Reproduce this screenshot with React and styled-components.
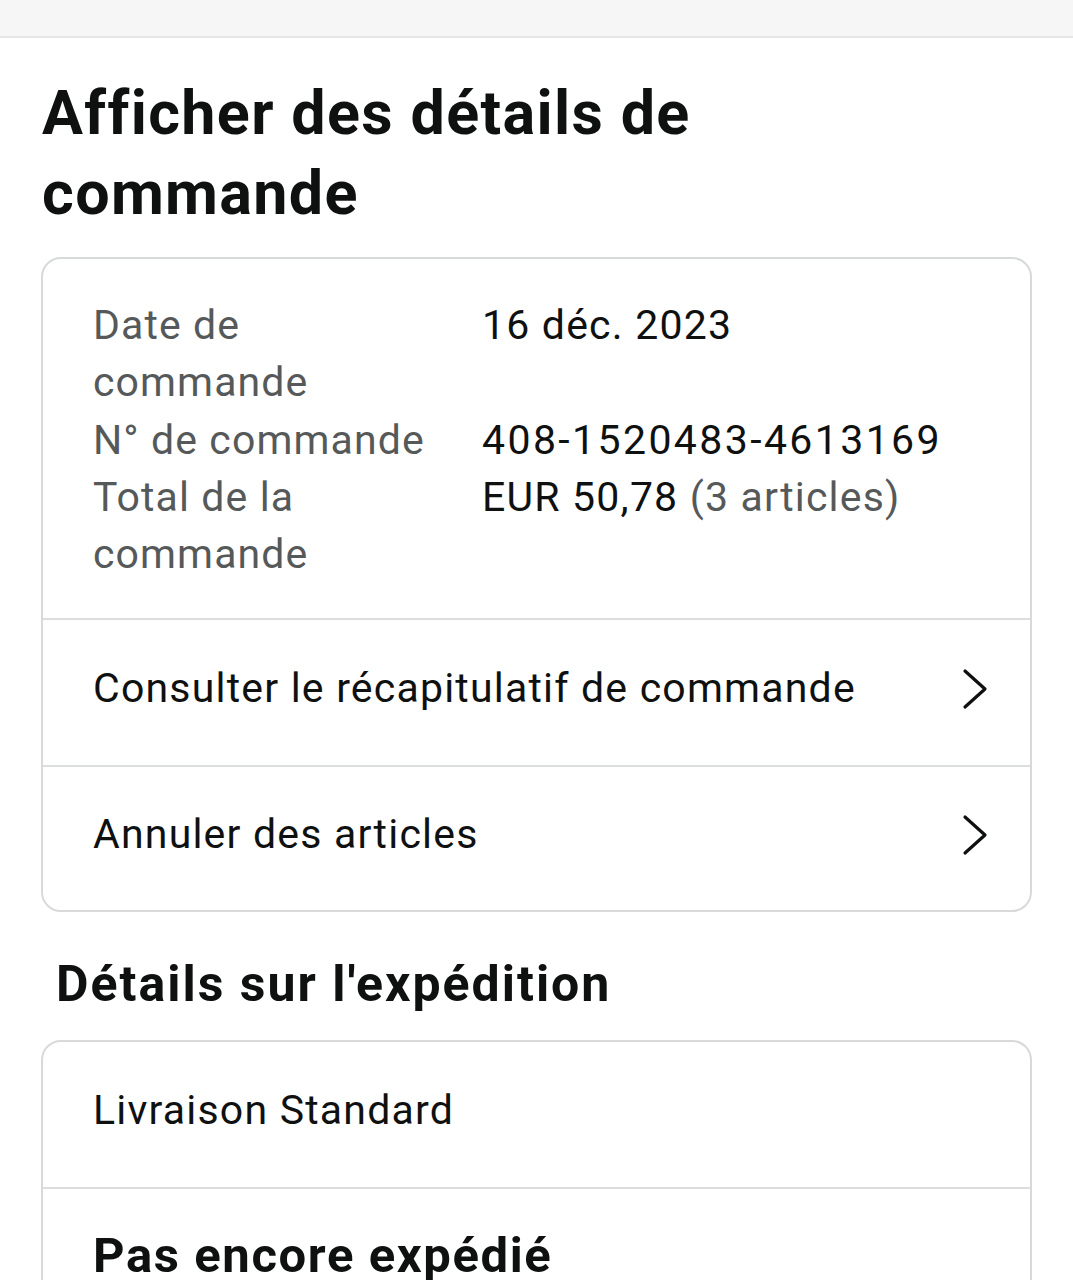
import React from 'react';
import styled, { createGlobalStyle } from 'styled-components';

const GlobalStyle = createGlobalStyle`
  html, body {
    margin: 0;
    padding: 0;
    background: #fff;
  }
  body {
    font-family: Roboto, "Noto Sans", "Liberation Sans", sans-serif;
    color: #0f1111;
  }
`;

const TopBar = styled.div`
  height: 36px;
  background: #f6f6f6;
  border-bottom: 2px solid #e6e6e6;
`;

const Page = styled.main`
  padding: 0 41px;
`;

const Title = styled.h1`
  margin: 0;
  padding: 35px 0 24px 1px;
  font-size: 61px;
  line-height: 80px;
  font-weight: 700;
  max-width: 720px;
  letter-spacing: 1.35px;
`;

const Card = styled.section`
  border: 2px solid #d8dada;
  border-radius: 20px;
  overflow: hidden;
`;

const Row = styled.div`
  display: flex;
  align-items: center;
  justify-content: space-between;
  min-height: 145px;
  padding: 0 40px 10px 50px;
  box-sizing: border-box;
  font-size: ${(p) => (p.$bold ? 49 : 41)}px;
  font-weight: ${(p) => (p.$bold ? 700 : 400)};
  letter-spacing: ${(p) => (p.$bold ? 1.6 : 1.2)}px;
  & + & {
    border-top: 2px solid #dcdede;
  }
`;

const InfoGrid = styled.dl`
  margin: 0;
  padding: 38px 40px 35px 50px;
  display: grid;
  grid-template-columns: 389px 1fr;
  font-size: 41px;
  line-height: 57.25px;
  letter-spacing: 1.1px;
  border-bottom: 2px solid #dcdede;
`;

const Label = styled.dt`
  color: #565959;
  max-width: 340px;
`;

const Value = styled.dd`
  margin: 0;
  color: #0f1111;
  letter-spacing: ${(p) => (p.$wide ? 2.4 : 1.2)}px;
`;

const Muted = styled.span`
  color: #565959;
`;

const SectionTitle = styled.h2`
  margin: 0;
  padding: 40px 0 24px 15px;
  font-size: 50px;
  line-height: 64px;
  font-weight: 700;
  letter-spacing: 2px;
`;

const ChevronIcon = styled.svg`
  flex: none;
  margin-top: 2px;
`;

const Chevron = () => (
  <ChevronIcon width="30" height="42" viewBox="0 0 30 42" fill="none">
    <path d="M5 3 L25 21 L5 39" stroke="#0f1111" strokeWidth="3.2" strokeLinecap="round" strokeLinejoin="round" />
  </ChevronIcon>
);

export default function App() {
  return (
    <>
      <GlobalStyle />
      <TopBar />
      <Page>
        <Title>Afficher des détails de commande</Title>
        <Card>
          <InfoGrid>
            <Label>Date de commande</Label>
            <Value>16 déc. 2023</Value>
            <Label>N° de commande</Label>
            <Value $wide>408-1520483-4613169</Value>
            <Label>Total de la commande</Label>
            <Value>
              EUR 50,78 <Muted>(3 articles)</Muted>
            </Value>
          </InfoGrid>
          <Row>
            <span>Consulter le récapitulatif de commande</span>
            <Chevron />
          </Row>
          <Row>
            <span>Annuler des articles</span>
            <Chevron />
          </Row>
        </Card>
        <SectionTitle>Détails sur l'expédition</SectionTitle>
        <Card>
          <Row>
            <span>Livraison Standard</span>
          </Row>
          <Row $bold>
            <span>Pas encore expédié</span>
          </Row>
        </Card>
      </Page>
    </>
  );
}
